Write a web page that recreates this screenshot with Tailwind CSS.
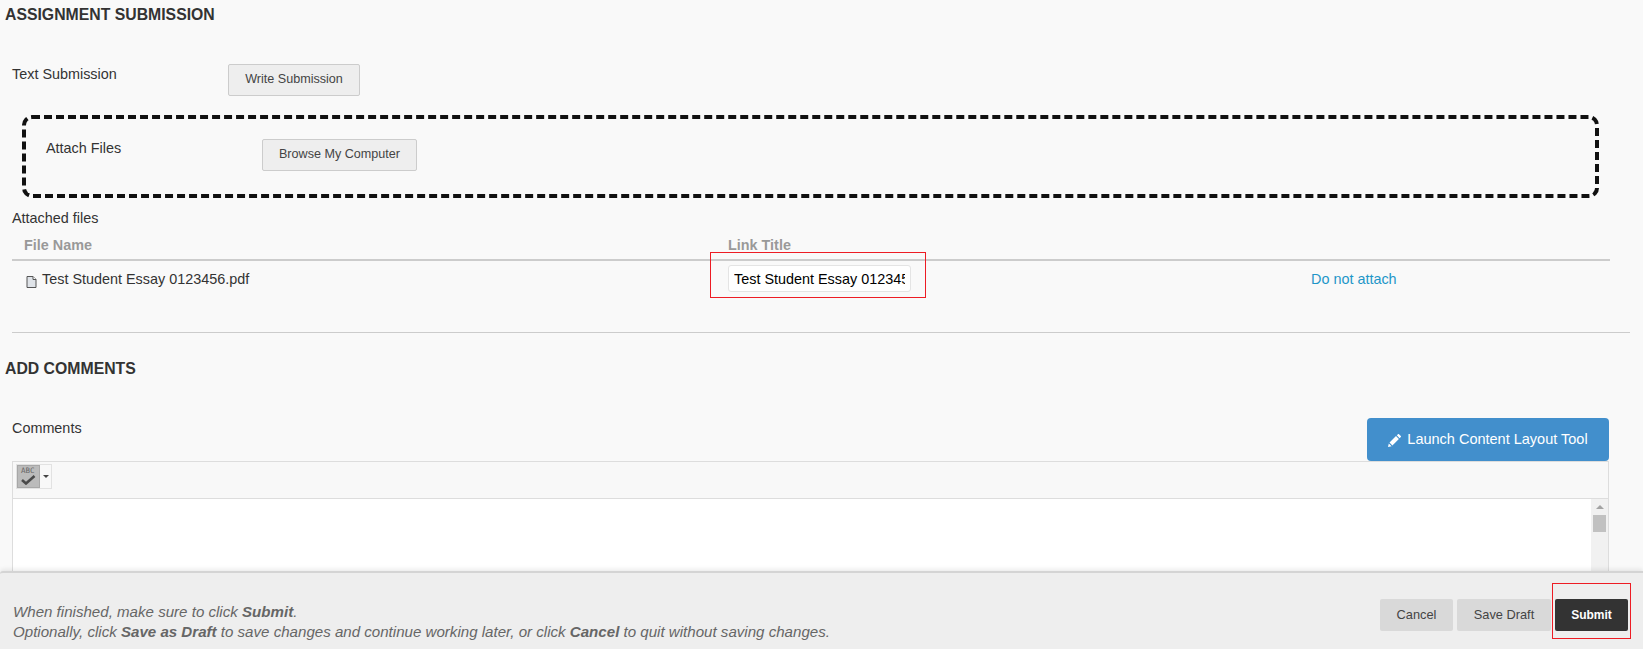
<!DOCTYPE html>
<html lang="en">
<head>
  <meta charset="UTF-8" />
  <title>Assignment Submission</title>
  <script src="https://cdn.jsdelivr.net/npm/@tailwindcss/browser@4"></script>
</head>
<body class="relative h-screen overflow-hidden bg-[#f9f9f9] font-['Liberation_Sans',Arial,sans-serif] text-[14.4px] text-[#333]">

  <!-- assignment submission -->
  <h2 class="pl-[5px] pt-[6px] text-[15.8px] leading-[18px] font-bold text-[#333]">ASSIGNMENT SUBMISSION</h2>

  <div class="mt-[40px] flex pl-[12px]">
    <div class="w-[216px] pt-[1px] leading-[18px]">Text Submission</div>
    <button class="h-[32px] w-[132px] rounded-[2px] border border-[#ccc] bg-[#eee] pb-[2px] text-[12.6px] text-[#444]">Write Submission</button>
  </div>

  <div class="mt-[19px] ml-[22px] flex h-[83px] w-[1577px] rounded-[10px] border-[4px] border-dashed border-[#111] pt-[20px] pl-[20px]">
    <div class="w-[216px] leading-[18px]">Attach Files</div>
    <button class="h-[32px] w-[155px] rounded-[2px] border border-[#ccc] bg-[#eee] pb-[2px] text-[12.6px] text-[#444]">Browse My Computer</button>
  </div>

  <div class="mt-[11px] ml-[12px] w-[1598px]">
    <div class="leading-[18px]">Attached files</div>
    <div class="mt-[9px] grid h-[16px] grid-cols-[716px_583px_1fr] leading-[18px] font-bold text-[#999]">
      <div class="pl-[12px]">File Name</div>
      <div>Link Title</div>
      <div></div>
    </div>
    <div class="mt-[7px] h-[2px] bg-[#ccc]"></div>
    <div class="grid h-[71px] grid-cols-[716px_583px_1fr]">
      <div class="flex h-[38px] items-center pl-[14px]">
        <svg class="mt-[3px] mr-[5px] h-[12px] w-[11px]" viewBox="0 0 11 12" fill="none">
          <path d="M1 .5h6l3 3v8H1z" fill="#dfe3e8" stroke="#555"/>
          <path d="M7 .5v3h3" fill="#fff" stroke="#555"/>
        </svg>
        <span>Test Student Essay 0123456.pdf</span>
      </div>
      <div class="relative pt-[4px]">
        <input class="h-[27px] w-[183px] rounded-[3px] border border-[#e4e4e4] bg-white px-[5px] text-black outline-none" value="Test Student Essay 0123456.pdf" />
        <div class="absolute top-[-9px] left-[-18px] h-[46px] w-[216px] border border-[#ed1c24]"></div>
      </div>
      <div class="flex h-[38px] items-center text-[#1e96c8]">Do not attach</div>
    </div>
  </div>

  <div class="ml-[12px] h-px w-[1618px] bg-[#ccc]"></div>

  <!-- comments -->
  <h2 class="mt-[27px] pl-[5px] text-[15.8px] leading-[18px] font-bold text-[#333]">ADD COMMENTS</h2>

  <div class="mt-[52px] ml-[12px] w-[1597px]">
    <div class="flex h-[43px] justify-between">
      <div class="mt-[-11px] leading-[18px]">Comments</div>
      <button class="mt-[-12px] flex h-[43px] w-[242px] items-center justify-center gap-[6px] rounded-[4px] bg-[#428fcc] pt-[1px] text-[14.5px] text-white">
        <svg class="h-[13px] w-[13px]" viewBox="0 0 13 13" fill="#fff"><path d="M0 13l.8-3.6 2.8 2.8zM1.5 8.6L8 2.1l2.9 2.9-6.5 6.5zM8.8 1.3L10 .2c.3-.3.7-.3 1 0l1.8 1.8c.3.3.3.7 0 1l-1.2 1.2z"/></svg>
        Launch Content Layout Tool
      </button>
    </div>
    <div class="mt-[-12px] border-x border-[#ddd]">
      <div class="flex h-[38px] border-y border-[#ddd] bg-[#f8f8f8] pt-[2px] pl-[3px]">
        <div class="flex h-[25px] w-[36px] border border-[#e2e2e2]">
          <div class="relative h-[23px] w-[23px] border border-[#a8a8a8] bg-[#bbb] pt-[1px] pl-[3px] font-['DejaVu_Sans_Mono',monospace] text-[7.5px] leading-[8px] text-[#666]">
            ABC
            <svg class="absolute top-[9px] left-[3px] h-[10px] w-[15px]" viewBox="0 0 15 10" fill="none"><path d="M1 5l4 3.5L13.5 1" stroke="#4a4a4a" stroke-width="2.6"/></svg>
          </div>
          <div class="flex flex-1 items-center justify-center">
            <div class="h-0 w-0 border-x-[3px] border-t-[3px] border-x-transparent border-t-[#444]"></div>
          </div>
        </div>
      </div>
      <div class="flex h-[75px] justify-end bg-white">
        <div class="flex w-[17px] flex-col items-center bg-[#f1f1f1] pt-[6px]">
          <div class="h-0 w-0 border-x-[4px] border-b-[4px] border-x-transparent border-b-[#a3a3a3]"></div>
          <div class="mt-[6px] h-[17px] w-[13px] bg-[#c1c1c1]"></div>
        </div>
      </div>
    </div>
  </div>

  <!-- sticky submit bar -->
  <div class="absolute right-0 bottom-0 left-0 flex h-[78px] items-end justify-between rounded-tl-[3px] border-t-2 border-[#d4d4d4] bg-[#eee] shadow-[0_-2px_4px_rgba(0,0,0,0.08)]">
    <p class="pb-[7px] pl-[13px] text-[15.1px] leading-[20px] text-[#666] italic">
      When finished, make sure to click <b class="font-bold">Submit</b>.<br />
      Optionally, click <b class="font-bold">Save as Draft</b> to save changes and continue working later, or click <b class="font-bold">Cancel</b> to quit without saving changes.
    </p>
    <div class="relative flex gap-[4px] pr-[15px] pb-[18px]">
      <button class="h-[32px] w-[73px] rounded-[2px] bg-[#d9d9d9] text-[12.8px] text-[#444]">Cancel</button>
      <button class="h-[32px] w-[94px] rounded-[2px] bg-[#d9d9d9] text-[12.8px] text-[#444]">Save Draft</button>
      <button class="h-[32px] w-[73px] rounded-[2px] bg-[#333] text-[12px] font-bold text-white">Submit</button>
      <div class="absolute top-[-16px] right-[12px] h-[56px] w-[79px] border border-[#ed1c24]"></div>
    </div>
  </div>
</body>
</html>
